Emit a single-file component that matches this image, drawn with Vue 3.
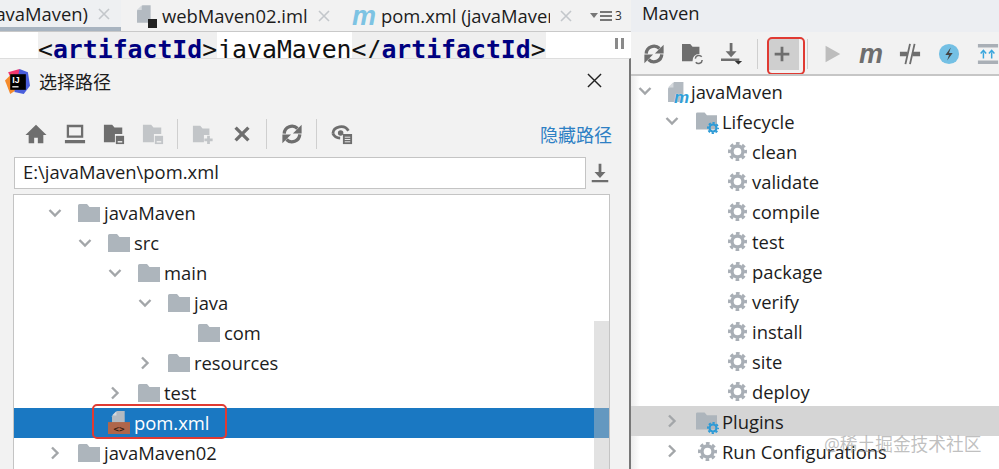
<script setup>
const leftTools = [
  { id: 'home' }, { id: 'laptop' }, { id: 'folderfile' }, { id: 'folderfile', off: true }, { sep: true },
  { id: 'foldernew', off: true }, { id: 'cross' }, { sep: true }, { id: 'sync' }, { sep: true }, { id: 'eye' }
]
const rightTools = [
  { id: 'sync' }, { id: 'foldersync' }, { id: 'download' }, { sep: true }, { id: 'plus', active: true }, { sep: true },
  { id: 'play', off: true }, { id: 'mbig' }, { id: 'skip' }, { id: 'bolt' }, { id: 'collapse' }
]
const fileTree = [
  { name: 'javaMaven', depth: 0, arrow: 'down', icon: 'folder' },
  { name: 'src', depth: 1, arrow: 'down', icon: 'folder' },
  { name: 'main', depth: 2, arrow: 'down', icon: 'folder' },
  { name: 'java', depth: 3, arrow: 'down', icon: 'folder' },
  { name: 'com', depth: 4, icon: 'folder' },
  { name: 'resources', depth: 3, arrow: 'right', icon: 'folder' },
  { name: 'test', depth: 2, arrow: 'right', icon: 'folder' },
  { name: 'pom.xml', depth: 1, icon: 'pom', selected: true },
  { name: 'javaMaven02', depth: 0, arrow: 'right', icon: 'folder' }
]
const goals = ['clean', 'validate', 'compile', 'test', 'package', 'verify', 'install', 'site', 'deploy']
</script>

<template>
  <div class="app">
    <svg class="defs" aria-hidden="true">
      <defs>
        <symbol id="folder" viewBox="0 0 22 18"><path d="M0 1.500Q0 0 1.500 0H9l2.500 3H22v15H0z" fill="#adb5bc"/></symbol>
        <symbol id="arrow-down" viewBox="0 0 14 14"><path d="M1.500 4l5.500 5.500L12.500 4" fill="none" stroke="#a3a6a9" stroke-width="2.400"/></symbol>
        <symbol id="arrow-right" viewBox="0 0 14 14"><path d="M4 1.500L9.500 7 4 12.500" fill="none" stroke="#a3a6a9" stroke-width="2.400"/></symbol>
        <symbol id="gear" viewBox="0 0 20 20">
          <circle cx="10" cy="10" r="8.500" fill="none" stroke="#a8aeb5" stroke-width="3" stroke-dasharray="3.800 2.880" stroke-dashoffset="1.900"/>
          <circle cx="10" cy="10" r="5.800" fill="none" stroke="#a8aeb5" stroke-width="3.600"/>
        </symbol>
        <symbol id="bluegear" viewBox="0 0 20 20">
          <circle cx="10" cy="10" r="8.500" fill="none" stroke="#2c9ad6" stroke-width="3" stroke-dasharray="3.800 2.880" stroke-dashoffset="1.900"/>
          <circle cx="10" cy="10" r="5.800" fill="none" stroke="#2c9ad6" stroke-width="3.600"/>
        </symbol>
        <symbol id="file" viewBox="0 0 22 26">
          <path d="M8 0h12v26H0V8z" fill="#b3bac1"/>
          <path d="M0 7L7 0v7z" fill="#d5d9dd"/>
        </symbol>
        <symbol id="thinx" viewBox="0 0 12 12"><path d="M1 1l10 10M11 1L1 11" stroke="#c3c7cb" stroke-width="1.600"/></symbol>
        <symbol id="home" viewBox="0 0 24 24"><path d="M12 2L0.500 13H4v9h6v-6h4v6h6v-9h3.500z" fill="#6e6e6e"/></symbol>
        <symbol id="laptop" viewBox="0 0 24 24"><path d="M3 2h18v14H3zM5.500 4.500v9h13v-9zM1 18.500h22V22H1z" fill="#6e6e6e" fill-rule="evenodd"/></symbol>
        <symbol id="folderfile" viewBox="0 0 24 24">
          <path d="M1 2h9l2.500 3H21v7h-8v9H1z" fill="currentColor"/>
          <path d="M14 14h9v9h-9z" fill="currentColor"/>
          <path d="M16 20.500h5" stroke="#f2f2f2" stroke-width="1.500"/>
        </symbol>
        <symbol id="foldernew" viewBox="0 0 24 24">
          <path d="M1 3h8l2.500 3H19v7h-6v8H1z" fill="currentColor"/>
          <path d="M18 14v9M13.500 18.500h9" stroke="currentColor" stroke-width="3"/>
        </symbol>
        <symbol id="cross" viewBox="0 0 24 24"><path d="M5 5l14 14M19 5L5 19" stroke="#6e6e6e" stroke-width="3.600"/></symbol>
        <symbol id="sync" viewBox="0 0 24 24">
          <path d="M3.500 11.500a8.500 8.500 0 0 1 14.500-5.500M20.500 12.500a8.500 8.500 0 0 1-14.500 5.500" fill="none" stroke="#6e6e6e" stroke-width="3.600"/>
          <path d="M22.500 2v9.500h-9.500zM1.500 22v-9.500h9.500z" fill="#6e6e6e"/>
        </symbol>
        <symbol id="eye" viewBox="0 0 24 24">
          <path d="M2 11.500a9 8 0 0 1 17-3" fill="none" stroke="#6e6e6e" stroke-width="3"/>
          <path d="M2 11.500a9 8 0 0 0 8 5" fill="none" stroke="#6e6e6e" stroke-width="3"/>
          <circle cx="10.500" cy="11" r="3" fill="#6e6e6e"/>
          <path d="M13 12h10v11H13z" fill="#6e6e6e"/>
          <path d="M15 15.500h6M15 18h6M15 20.500h6" stroke="#f2f2f2" stroke-width="1"/>
        </symbol>
        <symbol id="foldersync" viewBox="0 0 24 24">
          <path d="M0 1h9l2.500 3H19v8a7 7 0 0 0-7.500 8H0z" fill="#6e6e6e"/>
          <path d="M14.500 17a4 4 0 0 1 7-2M22 18.500a4 4 0 0 1-7 2.500" fill="none" stroke="#6e6e6e" stroke-width="1.700"/>
        </symbol>
        <symbol id="download" viewBox="0 0 24 24">
          <path d="M9.500 0h3v9h4.500L11 15.500 5 9h4.500zM0 17h20v2.500H0z" fill="#6e6e6e"/>
          <path d="M15 19.500h8l-4 4z" fill="#333"/>
        </symbol>
        <symbol id="savedown" viewBox="0 0 24 24"><path d="M10.500 2h3v9H18l-6 6.500L6 11h4.500zM3 19.500h18V22H3z" fill="#6e6e6e"/></symbol>
        <symbol id="plus" viewBox="0 0 24 24"><path d="M12 4v16M4 12h16" stroke="#6e6e6e" stroke-width="3"/></symbol>
        <symbol id="play" viewBox="0 0 24 24"><path d="M5 3l16 9-16 9z" fill="#bdbdbd"/></symbol>
        <symbol id="skip" viewBox="0 0 24 24">
          <path d="M1 9.500h8v5H1zM15 9.500h8v5h-8z" fill="#6e6e6e"/>
          <path d="M7 23L12 1M12 23L17 1" fill="none" stroke="#6e6e6e" stroke-width="2"/>
        </symbol>
        <symbol id="bolt" viewBox="0 0 24 24"><circle cx="12" cy="12" r="11" fill="#74c0e4"/><path d="M14 5l-6 8h4l-2 6 6-8h-4z" fill="#444"/></symbol>
        <symbol id="collapse" viewBox="0 0 24 24">
          <path d="M1 1h22v4H1zM1 19h22v4H1z" fill="#a9afb6"/>
          <path d="M7 17V10M4 11.500L7 8l3 3.500M16 17V10M13 11.500L16 8l3 3.500" fill="none" stroke="#38a5dc" stroke-width="1.600"/>
        </symbol>
      </defs>
    </svg>

    <div class="left">
      <div class="tabs">
        <div class="tab first">
          <span class="tabtext">pom.xml (javaMaven)</span>
          <svg class="tabx"><use href="#thinx"/></svg>
        </div>
        <div class="tab second">
          <span class="tabfile">
            <svg class="fileic"><use href="#file"/></svg>
            <i class="blackbadge"></i>
          </span>
          <span class="tabtext">webMaven02.iml</span>
          <svg class="tabx"><use href="#thinx"/></svg>
        </div>
        <div class="tab third">
          <span class="tabm">m</span>
          <span class="tabtext clip">pom.xml (javaMaven)</span>
          <svg class="tabx"><use href="#thinx"/></svg>
        </div>
        <div class="tabmore">
          <span class="tri"></span>
          <span class="lines"><i></i><i></i><i></i></span>
          <span class="num">3</span>
        </div>
      </div>

      <div class="editor">
        <span class="tag">&lt;<b>artifactId</b>&gt;</span><span>javaMaven</span><span class="tag">&lt;/<b>artifactId</b>&gt;</span>
        <div class="pause"><i></i><i></i></div>
      </div>

      <div class="dialog">
        <div class="titlebar">
          <svg class="logo" viewBox="0 0 24 24">
            <path d="M3 3L14 0l4 8-9 8z" fill="#f0366e"/>
            <path d="M0 11l7-7 7 14-9 6z" fill="#f58b2c"/>
            <path d="M14 0l8 3 2 13-6 8-9-2z" fill="#4a5fdc"/>
            <rect x="5" y="5" width="15" height="15" fill="#000"/>
            <rect x="7" y="16.500" width="6" height="1.200" fill="#fff"/>
            <text x="7" y="13.500" class="logotext">IJ</text>
          </svg>
          <span class="dlgtitle">选择路径</span>
          <svg class="closex" viewBox="0 0 16 16"><path d="M1 1l14 14M15 1L1 15" stroke="#222" stroke-width="1.500"/></svg>
        </div>

        <div class="dlgtools">
          <template v-for="(t, i) in leftTools" :key="i">
            <span v-if="t.sep" class="sep"></span>
            <span v-else class="cell" :class="{ off: t.off }"><svg class="tool"><use :href="'#' + t.id"/></svg></span>
          </template>
          <span class="hide">隐藏路径</span>
        </div>

        <div class="pathrow">
          <div class="pathinput">E:\javaMaven\pom.xml</div>
          <svg class="savedown"><use href="#savedown"/></svg>
        </div>

        <div class="filetree">
          <div
            v-for="row in fileTree"
            :key="row.name"
            class="row"
            :class="{ selected: row.selected }"
            :style="{ paddingLeft: 34 + row.depth * 30 + 'px' }"
          >
            <svg v-if="row.arrow" class="arrow"><use :href="'#arrow-' + row.arrow"/></svg>
            <span v-else class="arrow"></span>
            <svg v-if="row.icon === 'folder'" class="folder"><use href="#folder"/></svg>
            <svg v-else class="pomicon" viewBox="0 0 24 26">
              <use href="#file" x="3" y="0" width="18" height="18"/>
              <rect x="0" y="12" width="24" height="13" fill="#b0664a"/>
              <text x="12" y="22.500" text-anchor="middle" class="pomtext">&lt;&gt;</text>
            </svg>
            <span class="rowname">{{ row.name }}</span>
          </div>
          <div class="scrollbar"></div>
          <div class="pombox"></div>
        </div>
      </div>
    </div>

    <div class="right">
      <div class="mvnhead">Maven</div>
      <div class="mvntools">
        <template v-for="(t, i) in rightTools" :key="i">
          <span v-if="t.sep" class="sep"></span>
          <span v-else-if="t.id === 'mbig'" class="cell"><span class="bigm">m</span></span>
          <span v-else class="cell" :class="{ active: t.active }"><svg class="tool"><use :href="'#' + t.id"/></svg></span>
        </template>
      </div>
      <div class="mvntree">
        <div class="mrow d0">
          <svg class="arrow"><use href="#arrow-down"/></svg>
          <span class="modicon">
            <svg class="modfile"><use href="#file"/></svg>
            <span class="modm">m</span>
          </span>
          <span>javaMaven</span>
        </div>
        <div class="mrow d1">
          <svg class="arrow"><use href="#arrow-down"/></svg>
          <span class="gfolder">
            <svg class="folder"><use href="#folder"/></svg>
            <svg class="bluegear"><use href="#bluegear"/></svg>
          </span>
          <span>Lifecycle</span>
        </div>
        <div v-for="g in goals" :key="g" class="mrow d2">
          <svg class="gear"><use href="#gear"/></svg>
          <span>{{ g }}</span>
        </div>
        <div class="mrow d1 hover">
          <svg class="arrow"><use href="#arrow-right"/></svg>
          <span class="gfolder">
            <svg class="folder"><use href="#folder"/></svg>
            <svg class="bluegear"><use href="#bluegear"/></svg>
          </span>
          <span>Plugins</span>
        </div>
        <div class="mrow d1">
          <svg class="arrow"><use href="#arrow-right"/></svg>
          <span class="gfolder"><svg class="gear"><use href="#gear"/></svg></span>
          <span>Run Configurations</span>
        </div>
      </div>
      <div class="watermark">@稀土掘金技术社区</div>
    </div>
  </div>
</template>

<style>
html, body { margin: 0; padding: 0; overflow: hidden; }
</style>

<style scoped>
.app {
  width: 999px;
  height: 469px;
  display: flex;
  overflow: hidden;
  font-family: "Open Sans", "Noto Sans CJK SC", sans-serif;
  font-size: 18.4px;
  color: #1c1c1c;
  background: #fff;
}
.defs { position: absolute; width: 0; height: 0; }
.left { width: 631px; flex: none; display: flex; flex-direction: column; }

.tabs {
  height: 32px;
  flex: none;
  display: flex;
  background: #f2f2f2;
  box-sizing: border-box;
  border-bottom: 1px solid #c9c9c9;
}
.tab { display: flex; align-items: center; overflow: hidden; height: 31px; box-sizing: border-box; flex: none; }
.first { width: 121px; justify-content: flex-end; padding-right: 11px; border-bottom: 4px solid #a8b4c0; background: #eef0f2; }
.second { width: 215px; padding-left: 16px; }
.third { width: 246px; padding-left: 16px; }
.tabtext { white-space: nowrap; line-height: 26px; flex: none; }
.clip { width: 169px; overflow: hidden; margin-left: 7px; }
.tabx { width: 12px; height: 12px; margin-left: 10px; flex: none; }
.tabfile { position: relative; width: 20px; height: 24px; flex: none; margin-right: 5px; margin-top: 1px; }
.fileic { width: 15px; height: 20px; display: block; }
.blackbadge { position: absolute; right: 0; bottom: 0; width: 9px; height: 9px; background: #222; }
.tabm { font: italic 700 27px/24px "Liberation Sans", sans-serif; color: #7dc3e3; width: 22px; flex: none; }
.tabmore { display: flex; align-items: center; gap: 2px; margin-left: 8px; }
.tri { width: 0; height: 0; border-left: 4px solid transparent; border-right: 4px solid transparent; border-top: 5px solid #777; }
.lines { display: flex; flex-direction: column; gap: 2px; width: 12px; }
.lines i { height: 2px; background: #777; display: block; }
.num { font-size: 12px; color: #333; margin-left: 1px; }

.editor {
  height: 26px;
  flex: none;
  box-sizing: border-box;
  padding-left: 38px;
  font-family: "DejaVu Sans Mono", monospace;
  font-size: 24.800px;
  line-height: 35px;
  white-space: pre;
  display: flex;
  position: relative;
  overflow: hidden;
  color: #111;
  background: #fff;
}
.tag { background: #efefef; }
.tag b { color: #000080; }
.pause { position: absolute; left: 615px; top: 6px; display: flex; gap: 3px; }
.pause i { width: 3px; height: 11px; background: #8a8a8a; display: block; }

.dialog {
  flex: 1;
  min-height: 0;
  background: #f2f2f2;
  box-sizing: border-box;
  border-right: 2px solid #777;
  border-top: 1px solid #ddd;
  display: flex;
  flex-direction: column;
}
.titlebar { height: 44px; flex: none; display: flex; align-items: center; padding-left: 5px; box-sizing: border-box; }
.logo { width: 25px; height: 25px; flex: none; }
.logotext { font: 700 8.500px "Liberation Sans", sans-serif; fill: #fff; }
.dlgtitle { margin-left: 9px; font-size: 18px; }
.closex { width: 15px; height: 15px; margin-left: auto; margin-right: 27px; margin-top: -2px; }

.dlgtools { height: 46px; margin-top: 8px; flex: none; display: flex; align-items: center; padding-left: 16px; padding-right: 17px; }
.cell { width: 39px; height: 30px; display: flex; align-items: center; justify-content: center; flex: none; color: #6e6e6e; }
.cell.off { color: #c2c5c8; }
.tool { width: 22px; height: 22px; }
.sep { width: 1px; height: 30px; margin: 0 5px; background: #cfcfcf; flex: none; }
.hide { margin-left: auto; color: #2e80c4; font-size: 18px; }

.pathrow { display: flex; align-items: center; flex: none; height: 32px; padding-left: 14px; }
.pathinput {
  width: 572px;
  height: 32px;
  box-sizing: border-box;
  background: #fff;
  border: 1px solid #c4c4c4;
  padding-left: 8px;
  line-height: 28px;
  flex: none;
}
.savedown { width: 22px; height: 22px; margin-left: 3px; }

.filetree {
  margin: 5px 19px 0 13px;
  flex: 1;
  min-height: 0;
  border: 1px solid #c4c4c4;
  border-bottom: none;
  background: #fff;
  padding-top: 3px;
  position: relative;
  overflow: hidden;
}
.row { height: 30px; display: flex; align-items: center; box-sizing: border-box; }
.row.selected { background: #1a78c2; color: #fff; }
.arrow { width: 14px; height: 14px; flex: none; }
.folder { width: 22px; height: 18px; flex: none; margin-left: 16px; }
.pomicon { width: 22px; height: 26px; flex: none; margin-left: 16px; }
.pomtext { font: 700 10px "DejaVu Sans Mono", monospace; fill: #3a1d10; }
.rowname { margin-left: 4px; line-height: 30px; }
.scrollbar { position: absolute; right: 0; top: 126px; bottom: 0; width: 15px; background: rgba(190, 190, 190, .45); }
.pombox {
  position: absolute;
  left: 78px;
  top: 209px;
  width: 135px;
  height: 35px;
  border: 2px solid #e03a32;
  border-radius: 5px;
  box-sizing: border-box;
}

.right {
  flex: 1;
  display: flex;
  flex-direction: column;
  position: relative;
  min-width: 0;
  overflow: hidden;
}
.mvnhead { height: 32px; flex: none; background: #eceef2; padding-left: 11px; line-height: 25px; box-sizing: border-box; }
.mvntools {
  height: 44px;
  flex: none;
  display: flex;
  align-items: center;
  background: #f2f2f2;
  border-bottom: 2px solid #c6c6c6;
  box-sizing: border-box;
  padding-left: 3.500px;
  padding-top: 1px;
  overflow: hidden;
}
.cell.active { position: relative; }
.cell.active::before {
  content: "";
  position: absolute;
  left: 6px;
  top: 0;
  width: 30px;
  height: 31px;
  background: #cfcfcf;
}
.cell.active::after {
  content: "";
  position: absolute;
  left: 4.500px;
  top: -2px;
  width: 38px;
  height: 38px;
  border: 2px solid #e03a32;
  border-radius: 5px;
  box-sizing: border-box;
}
.cell.active .tool { position: relative; z-index: 1; }
.bigm { font: italic 700 27px/24px "Liberation Sans", sans-serif; color: #6e6e6e; }

.mvntree {
  flex: 1;
  min-height: 0;
  background: linear-gradient(to right, #ececec, #fff 9px);
}
.mrow { height: 30px; display: flex; align-items: center; white-space: nowrap; box-sizing: border-box; }
.mrow.d0 { padding-left: 7px; }
.mrow.d1 { padding-left: 34px; }
.mrow.d2 { padding-left: 97px; }
.mrow.hover { background: #d5d5d5; }
.modicon { position: relative; width: 23px; height: 26px; flex: none; margin-left: 16px; }
.modfile { width: 17px; height: 20px; position: absolute; left: 0; top: 4px; }
.modm { position: absolute; left: 6px; top: 11px; font: italic 700 17px/17px "Liberation Sans", sans-serif; color: #2f9fd8; text-shadow: 0 0 1px #fff; }
.gfolder { position: relative; width: 26px; height: 24px; flex: none; margin-left: 17px; display: flex; align-items: center; }
.gfolder .folder { margin-left: 0; width: 21px; height: 18px; }
.gfolder .gear { margin-left: 2px; }
.bluegear { position: absolute; left: 11px; top: 13px; width: 12px; height: 12px; }
.gear { width: 19px; height: 19px; flex: none; margin-right: 5px; }
.watermark {
  position: absolute;
  left: 193px;
  top: 430px;
  font-size: 17.700px;
  color: rgba(150, 150, 150, .6);
  white-space: nowrap;
}
</style>
